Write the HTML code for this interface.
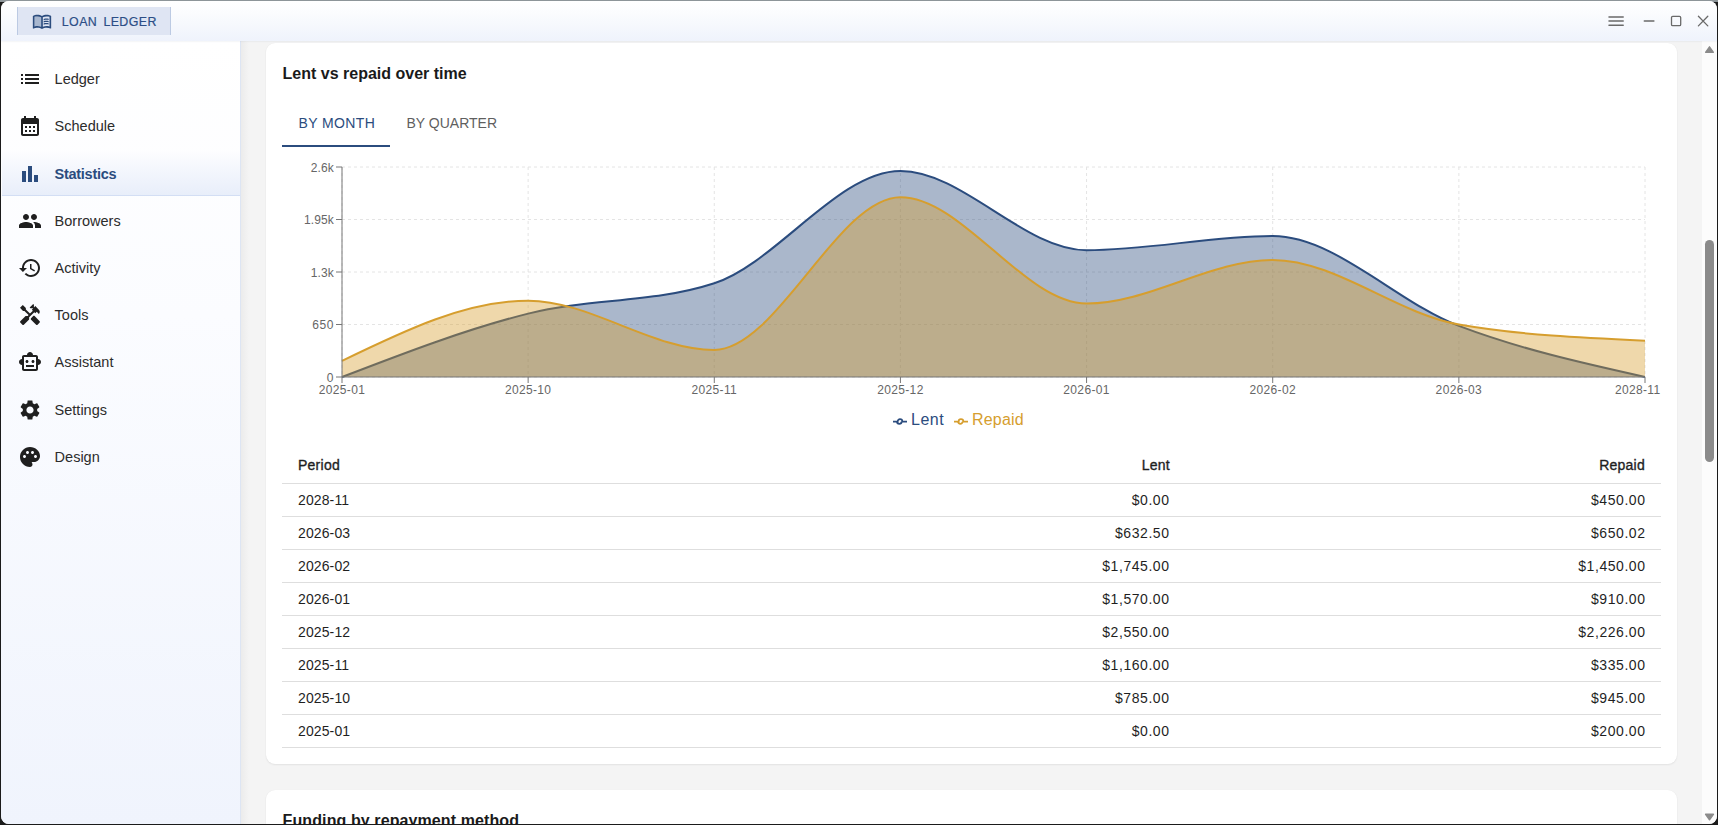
<!DOCTYPE html>
<html><head><meta charset="utf-8"><title>Loan Ledger</title>
<style>
*{box-sizing:border-box;margin:0;padding:0}
html,body{width:1718px;height:825px;overflow:hidden;background:#1b1b1b;font-family:"Liberation Sans",sans-serif}
#edge-top{position:absolute;left:0;top:0;width:1718px;height:2px;background:#8d9599}
#win{position:absolute;left:1px;top:1px;width:1716px;height:822.5px;border-radius:8px;overflow:hidden;background:#f4f4f4}
#win>*{position:absolute}
#tbar{left:0;top:0;width:1716px;height:39.5px;background:linear-gradient(#ffffff 0%,#fbfcfe 30%,#eff3fc 100%);box-shadow:0 0 2px rgba(60,70,100,.14);z-index:5}
#chip{position:absolute;left:16px;top:6px;width:154px;height:28px;background:#dfe5f3;border-left:1px solid #bccae3;border-right:1px solid #bccae3}
#chip svg{position:absolute;left:14.2px;top:3.75px;width:20px;height:20px;fill:#2b4c7e}
#chip span{position:absolute;left:43.8px;top:7.5px;font-size:12.4px;line-height:14px;letter-spacing:0.4px;word-spacing:2.4px;color:#2c4e86;white-space:nowrap;-webkit-text-stroke:.2px #2c4e86}
#side{left:0;top:39.5px;width:240px;height:783px;border-right:1px solid #dde5f3;background:linear-gradient(#ffffff 0%,#fbfcff 35%,#f0f4fd 100%);}
#sideshadow{left:240px;top:39.5px;width:8px;height:783px;background:linear-gradient(90deg,rgba(0,0,0,.035),rgba(0,0,0,0))}
.nav{position:absolute;left:1px;width:238px;height:47px;color:#2c2c2c;font-size:14.5px}
.nav .ni{position:absolute;left:15.6px;top:11px;width:24px;height:24px;fill:#1f1f1f}
.nav span{position:absolute;left:52.6px;top:14.5px;line-height:18px;white-space:nowrap}
.nav.sel{color:#2b4c7e;font-weight:bold;letter-spacing:-.28px}
#selbg{position:absolute;left:1px;top:110.7px;width:238px;height:44.5px;background:linear-gradient(#fdfdff 0%,#e8eefa 100%);border-bottom:1px solid #d3def4}
.nav.sel .ni{fill:#2b4c7e}
.card{background:#fff;border-radius:9px;box-shadow:0 1px 2px rgba(0,0,0,.07),0 0 1px rgba(0,0,0,.06)}
#card1{left:265px;top:42px;width:1411px;height:721px}
#card2{left:265px;top:789px;width:1411px;height:100px}
.h{position:absolute;left:16.6px;top:21px;font-size:16px;font-weight:bold;line-height:20px;color:#1a1a1a;white-space:nowrap;letter-spacing:0}
.tab{position:absolute;top:114px;font-size:14px;line-height:18px;white-space:nowrap}
#tabline{position:absolute;left:282px;top:145px;width:108px;height:2px;background:#2b4c7e}
#abs{left:-1px;top:-1px;width:1718px;height:825px;pointer-events:none}
#abs>*{position:absolute}
.grid{stroke:#e4e4e4;stroke-width:1;stroke-dasharray:3 3;fill:none}
.axis{stroke:#777;stroke-width:1;fill:none}
.tick{font-size:12px;fill:#666;font-family:"Liberation Sans",sans-serif;letter-spacing:.35px}
.ty{letter-spacing:.15px}
.th{top:456px;font-size:14px;line-height:18px;color:#1f1f1f;-webkit-text-stroke:.35px #1f1f1f;letter-spacing:.25px}
.tr{left:282px;width:1379px;height:33px;border-bottom:1px solid #dedede;font-size:14px;line-height:18px;color:#1f1f1f}
.tr span{position:absolute;top:7px;white-space:nowrap;letter-spacing:.55px}
.c1{left:16px;letter-spacing:.12px !important} .c2{right:491.5px} .c3{right:15.5px}
#hline{left:282px;top:483px;width:1379px;height:1px;background:#dedede}
.lg{top:410px;font-size:16px;line-height:20px;white-space:nowrap}
#sb{left:1701px;top:39.5px;width:15px;height:783px;background:#fcfcfc}
#thumb{position:absolute;left:3px;top:199.5px;width:9px;height:222px;border-radius:5px;background:#8b8b8b}
</style></head><body>
<div id="edge-top"></div>
<div id="win">
<div id="side">
<div id="selbg"></div>
<div class="nav" style="top:15.0px"><svg class="ni" viewBox="0 0 24 24"><path d="M3 13h2v-2H3v2zm0 4h2v-2H3v2zm0-8h2V7H3v2zm4 4h14v-2H7v2zm0 4h14v-2H7v2zM7 7v2h14V7H7z"/></svg><span>Ledger</span></div>
<div class="nav" style="top:62.0px"><svg class="ni" viewBox="0 0 24 24"><path d="M19 4h-1V2h-2v2H8V2H6v2H5c-1.11 0-1.99.9-1.99 2L3 20c0 1.1.89 2 2 2h14c1.1 0 2-.9 2-2V6c0-1.1-.9-2-2-2zm0 16H5V10h14v10zM9 14H7v-2h2v2zm4 0h-2v-2h2v2zm4 0h-2v-2h2v2zm-8 4H7v-2h2v2zm4 0h-2v-2h2v2zm4 0h-2v-2h2v2z"/></svg><span>Schedule</span></div>
<div class="nav sel" style="top:110.0px"><svg class="ni" viewBox="0 0 24 24"><path d="M4 9h4v11H4zm12 4h4v7h-4zm-6-9h4v16h-4z"/></svg><span>Statistics</span></div>
<div class="nav" style="top:157.0px"><svg class="ni" viewBox="0 0 24 24"><path d="M16 11c1.66 0 2.99-1.34 2.99-3S17.66 5 16 5c-1.66 0-3 1.34-3 3s1.34 3 3 3zm-8 0c1.66 0 2.99-1.34 2.99-3S9.66 5 8 5C6.34 5 5 6.34 5 8s1.34 3 3 3zm0 2c-2.33 0-7 1.17-7 3.5V19h14v-2.500c0-2.330-4.670-3.500-7-3.500zm8 0c-.29 0-.62.02-.97.05 1.160.84 1.970 1.970 1.970 3.450V19h6v-2.500c0-2.330-4.670-3.500-7-3.500z"/></svg><span>Borrowers</span></div>
<div class="nav" style="top:204.0px"><svg class="ni" viewBox="0 0 24 24"><path d="M13 3c-4.970 0-9 4.030-9 9H1l3.890 3.890.07.14L9 12H6c0-3.870 3.130-7 7-7s7 3.130 7 7-3.130 7-7 7c-1.930 0-3.680-.79-4.940-2.060l-1.420 1.420C8.270 19.990 10.510 21 13 21c4.970 0 9-4.030 9-9s-4.030-9-9-9zm-1 5v5l4.280 2.540.72-1.210-3.500-2.080V8H12z"/></svg><span>Activity</span></div>
<div class="nav" style="top:251.0px"><svg class="ni" viewBox="0 0 24 24"><path d="m21.670 18.170-5.300-5.300h-.99l-2.540 2.540v.99l5.300 5.300c.39.39 1.020.39 1.410 0l2.120-2.120c.39-.38.39-1.020 0-1.410z"/><path d="m17.340 10.190 1.410-1.410 2.120 2.120c1.170-1.170 1.170-3.070 0-4.240l-3.540-3.540-1.410 1.410V1.710l-.7-.71-3.540 3.540.71.71h2.830l-1.410 1.410 1.060 1.060-2.890 2.890-4.130-4.130V5.060L4.830 2.040 2 4.870 5.030 7.900h1.410l4.130 4.130-.85.85H7.600l-5.300 5.300c-.39.39-.39 1.020 0 1.410l2.120 2.120c.39.39 1.020.39 1.410 0l5.300-5.300v-2.120l5.150-5.150 1.060 1.050z"/></svg><span>Tools</span></div>
<div class="nav" style="top:298.0px"><svg class="ni" viewBox="0 0 24 24"><path d="M20 9V7c0-1.100-.9-2-2-2h-3c0-1.660-1.340-3-3-3S9 3.340 9 5H6c-1.100 0-2 .9-2 2v2c-1.660 0-3 1.340-3 3s1.340 3 3 3v4c0 1.100.9 2 2 2h12c1.100 0 2-.9 2-2v-4c1.660 0 3-1.340 3-3s-1.340-3-3-3zm-2 10H6V7h12v12zm-9-6c-.83 0-1.500-.67-1.500-1.500S8.170 10 9 10s1.500.67 1.500 1.500S9.830 13 9 13zm7.500-1.500c0 .83-.67 1.500-1.500 1.500s-1.500-.67-1.500-1.500.67-1.500 1.500-1.500 1.500.67 1.500 1.500zM8 15h8v2H8v-2z"/></svg><span>Assistant</span></div>
<div class="nav" style="top:346.0px"><svg class="ni" viewBox="0 0 24 24"><path d="M19.140 12.940c.04-.3.06-.61.06-.94 0-.32-.02-.64-.07-.94l2.030-1.580c.18-.14.23-.41.12-.61l-1.920-3.320c-.12-.22-.37-.29-.59-.22l-2.390.96c-.5-.38-1.030-.7-1.620-.94l-.36-2.540c-.04-.24-.24-.41-.48-.41h-3.840c-.24 0-.43.17-.47.41l-.36 2.540c-.59.24-1.130.57-1.620.94l-2.390-.96c-.22-.08-.47 0-.59.22L2.740 8.870c-.12.21-.08.47.12.61l2.030 1.580c-.05.3-.09.63-.09.94s.02.64.07.94l-2.030 1.580c-.18.14-.23.41-.12.61l1.920 3.320c.12.22.37.29.59.22l2.390-.96c.5.38 1.030.7 1.620.94l.36 2.540c.05.24.24.41.48.41h3.840c.24 0 .44-.17.47-.41l.36-2.540c.59-.24 1.130-.56 1.620-.94l2.390.96c.22.08.47 0 .59-.22l1.920-3.320c.12-.22.07-.47-.12-.61l-2.010-1.580zM12 15.600c-1.980 0-3.600-1.620-3.600-3.600s1.620-3.600 3.600-3.600 3.600 1.620 3.600 3.600-1.620 3.600-3.600 3.600z"/></svg><span>Settings</span></div>
<div class="nav" style="top:393.0px"><svg class="ni" viewBox="0 0 24 24"><path d="M12 2C6.490 2 2 6.490 2 12s4.490 10 10 10c1.380 0 2.500-1.120 2.500-2.500 0-.61-.23-1.200-.64-1.670-.08-.1-.13-.21-.13-.33 0-.28.22-.5.5-.5H16c3.310 0 6-2.690 6-6 0-4.960-4.490-9-10-9zm5.500 11c-.83 0-1.500-.67-1.500-1.500s.67-1.500 1.500-1.500 1.500.67 1.500 1.500-.67 1.500-1.500 1.500zm-3-4c-.83 0-1.500-.67-1.500-1.500S13.670 6 14.500 6s1.500.67 1.500 1.500S15.330 9 14.500 9zM5 11.500c0-.83.67-1.500 1.500-1.500s1.500.67 1.500 1.500S7.330 13 6.500 13 5 12.330 5 11.500zm6-4c0 .83-.67 1.500-1.500 1.500S8 8.330 8 7.500 8.670 6 9.500 6s1.500.67 1.500 1.500z"/></svg><span>Design</span></div>

</div>
<div id="sideshadow"></div>
<div id="card1" class="card"><div class="h">Lent vs repaid over time</div></div>
<div id="card2" class="card"><div class="h" style="letter-spacing:.1px">Funding by repayment method</div></div>
<div id="abs">
<span class="tab" style="left:298.5px;color:#2b4c7e;letter-spacing:.4px">BY MONTH</span>
<span class="tab" style="left:406.5px;color:#5f5f5f">BY QUARTER</span>
<div id="tabline"></div>
<svg style="left:0;top:0" width="1718" height="825" viewBox="0 0 1718 825">
<line x1="342.0" x2="1645.0" y1="377.00" y2="377.00" class="grid"/><line x1="342.0" x2="1645.0" y1="324.50" y2="324.50" class="grid"/><line x1="342.0" x2="1645.0" y1="272.00" y2="272.00" class="grid"/><line x1="342.0" x2="1645.0" y1="219.50" y2="219.50" class="grid"/><line x1="342.0" x2="1645.0" y1="167.00" y2="167.00" class="grid"/><line x1="342.00" x2="342.00" y1="167.0" y2="377.0" class="grid"/><line x1="528.14" x2="528.14" y1="167.0" y2="377.0" class="grid"/><line x1="714.29" x2="714.29" y1="167.0" y2="377.0" class="grid"/><line x1="900.43" x2="900.43" y1="167.0" y2="377.0" class="grid"/><line x1="1086.57" x2="1086.57" y1="167.0" y2="377.0" class="grid"/><line x1="1272.71" x2="1272.71" y1="167.0" y2="377.0" class="grid"/><line x1="1458.86" x2="1458.86" y1="167.0" y2="377.0" class="grid"/><line x1="1645.00" x2="1645.00" y1="167.0" y2="377.0" class="grid"/>
<path d="M342.000,377.000C404.048,353.106,466.095,329.212,528.143,313.596C590.190,297.981,652.238,303.500,714.286,283.308C776.333,263.115,838.381,171.038,900.429,171.038C962.476,171.038,1024.524,250.192,1086.571,250.192C1148.619,250.192,1210.667,236.058,1272.714,236.058C1334.762,236.058,1396.810,302.423,1458.857,325.913C1520.905,349.404,1582.952,363.202,1645.000,377.000L1645.000,377.000 L342.000,377.000 Z" fill="#2b4c7e" fill-opacity=".4"/>
<path d="M342.000,377.000C404.048,353.106,466.095,329.212,528.143,313.596C590.190,297.981,652.238,303.500,714.286,283.308C776.333,263.115,838.381,171.038,900.429,171.038C962.476,171.038,1024.524,250.192,1086.571,250.192C1148.619,250.192,1210.667,236.058,1272.714,236.058C1334.762,236.058,1396.810,302.423,1458.857,325.913C1520.905,349.404,1582.952,363.202,1645.000,377.000" fill="none" stroke="#2b4c7e" stroke-width="2"/>
<path d="M342.000,360.846C404.048,330.760,466.095,300.673,528.143,300.673C590.190,300.673,652.238,349.942,714.286,349.942C776.333,349.942,838.381,197.208,900.429,197.208C962.476,197.208,1024.524,303.500,1086.571,303.500C1148.619,303.500,1210.667,259.885,1272.714,259.885C1334.762,259.885,1396.810,313.728,1458.857,324.498C1520.905,335.269,1582.952,337.961,1645.000,340.654L1645.000,377.000 L342.000,377.000 Z" fill="#d69e2e" fill-opacity=".4"/>
<path d="M342.000,360.846C404.048,330.760,466.095,300.673,528.143,300.673C590.190,300.673,652.238,349.942,714.286,349.942C776.333,349.942,838.381,197.208,900.429,197.208C962.476,197.208,1024.524,303.500,1086.571,303.500C1148.619,303.500,1210.667,259.885,1272.714,259.885C1334.762,259.885,1396.810,313.728,1458.857,324.498C1520.905,335.269,1582.952,337.961,1645.000,340.654" fill="none" stroke="#d69e2e" stroke-width="2"/>
<line x1="342.0" x2="1645.0" y1="377.0" y2="377.0" class="axis"/><line x1="342.0" x2="342.0" y1="167.0" y2="377.0" class="axis"/><line x1="342.00" x2="342.00" y1="377.0" y2="383.0" class="axis"/><text x="342.00" y="394" text-anchor="middle" class="tick">2025-01</text><line x1="528.14" x2="528.14" y1="377.0" y2="383.0" class="axis"/><text x="528.14" y="394" text-anchor="middle" class="tick">2025-10</text><line x1="714.29" x2="714.29" y1="377.0" y2="383.0" class="axis"/><text x="714.29" y="394" text-anchor="middle" class="tick">2025-11</text><line x1="900.43" x2="900.43" y1="377.0" y2="383.0" class="axis"/><text x="900.43" y="394" text-anchor="middle" class="tick">2025-12</text><line x1="1086.57" x2="1086.57" y1="377.0" y2="383.0" class="axis"/><text x="1086.57" y="394" text-anchor="middle" class="tick">2026-01</text><line x1="1272.71" x2="1272.71" y1="377.0" y2="383.0" class="axis"/><text x="1272.71" y="394" text-anchor="middle" class="tick">2026-02</text><line x1="1458.86" x2="1458.86" y1="377.0" y2="383.0" class="axis"/><text x="1458.86" y="394" text-anchor="middle" class="tick">2026-03</text><line x1="1645.00" x2="1645.00" y1="377.0" y2="383.0" class="axis"/><text x="1660.5" y="394" text-anchor="end" class="tick">2028-11</text><line x1="336.0" x2="342.0" y1="377.00" y2="377.00" class="axis"/><text x="334.0" y="381.70" text-anchor="end" class="tick ty" style="letter-spacing:.6px">0</text><line x1="336.0" x2="342.0" y1="324.50" y2="324.50" class="axis"/><text x="334.0" y="329.20" text-anchor="end" class="tick ty" style="letter-spacing:.6px">650</text><line x1="336.0" x2="342.0" y1="272.00" y2="272.00" class="axis"/><text x="334.0" y="276.70" text-anchor="end" class="tick ty">1.3k</text><line x1="336.0" x2="342.0" y1="219.50" y2="219.50" class="axis"/><text x="334.0" y="224.20" text-anchor="end" class="tick ty">1.95k</text><line x1="336.0" x2="342.0" y1="167.00" y2="167.00" class="axis"/><text x="334.0" y="171.70" text-anchor="end" class="tick ty">2.6k</text>
<g fill="none" stroke-width="1.75">
<path stroke="#2b4c7e" d="M893,421.5h4.67a2.33,2.33 0 1,1 4.66,0h4.67M901.66,421.5a2.33,2.33 0 1,1 -4.66,0"/>
<path stroke="#d69e2e" d="M954,421.5h4.67a2.33,2.33 0 1,1 4.66,0h4.67M962.66,421.5a2.33,2.33 0 1,1 -4.66,0"/>
</g>
</svg>
<span class="lg" style="left:911px;color:#2b4c7e;letter-spacing:.5px">Lent</span>
<span class="lg" style="left:972px;color:#d69e2e;letter-spacing:.2px">Repaid</span>
<span class="th" style="left:298px">Period</span>
<span class="th" style="right:548px">Lent</span>
<span class="th" style="right:73px">Repaid</span>
<div id="hline"></div>
<div class="tr" style="top:484px"><span class="c1">2028-11</span><span class="c2">$0.00</span><span class="c3">$450.00</span></div>
<div class="tr" style="top:517px"><span class="c1">2026-03</span><span class="c2">$632.50</span><span class="c3">$650.02</span></div>
<div class="tr" style="top:550px"><span class="c1">2026-02</span><span class="c2">$1,745.00</span><span class="c3">$1,450.00</span></div>
<div class="tr" style="top:583px"><span class="c1">2026-01</span><span class="c2">$1,570.00</span><span class="c3">$910.00</span></div>
<div class="tr" style="top:616px"><span class="c1">2025-12</span><span class="c2">$2,550.00</span><span class="c3">$2,226.00</span></div>
<div class="tr" style="top:649px"><span class="c1">2025-11</span><span class="c2">$1,160.00</span><span class="c3">$335.00</span></div>
<div class="tr" style="top:682px"><span class="c1">2025-10</span><span class="c2">$785.00</span><span class="c3">$945.00</span></div>
<div class="tr" style="top:715px"><span class="c1">2025-01</span><span class="c2">$0.00</span><span class="c3">$200.00</span></div>

</div>
<div id="sb"><div id="thumb"></div>
<svg style="position:absolute;left:0;top:0" width="15" height="783" viewBox="0 0 15 783"><path d="M7.5 5.8 L11.4 11.3 H3.6Z M7.500 778.800 L11.400 773.300 H3.600Z" fill="#8b8b8b" stroke="#8b8b8b" stroke-width="1.4" stroke-linejoin="round"/></svg>
</div>
<div id="tbar">
<div id="chip"><svg viewBox="0 0 24 24"><path d="M21 5c-1.110-.35-2.330-.5-3.500-.5-1.950 0-4.050.4-5.500 1.500-1.450-1.100-3.550-1.500-5.500-1.500S2.450 4.900 1 6v14.650c0 .25.25.5.5.5.1 0 .15-.05.25-.05C3.100 20.450 5.050 20 6.500 20c1.950 0 4.050.4 5.500 1.500 1.350-.85 3.800-1.500 5.500-1.500 1.650 0 3.350.3 4.750 1.050.1.050.15.050.25.050.25 0 .5-.25.5-.5V6c-.6-.45-1.250-.75-2-1zM3 18.500V7c1.100-.35 2.300-.5 3.500-.5 1.340 0 3.130.41 4.500.99v11.500C9.630 18.410 7.840 18 6.500 18c-1.200 0-2.400.15-3.500.5zm18 0c-1.100-.35-2.300-.5-3.500-.5-1.340 0-3.130.41-4.500.99V7.490c1.370-.59 3.160-.99 4.500-.99 1.200 0 2.400.15 3.500.5v11.500z"/><path d="M11 7.490C9.630 6.910 7.840 6.500 6.500 6.500c-1.200 0-2.400.15-3.500.5v11.500c1.100-.35 2.300-.5 3.500-.5 1.340 0 3.130.41 4.500.99V7.490z" opacity=".3"/><path d="M17.500 10.500c.88 0 1.730.09 2.500.26V9.240c-.79-.15-1.640-.24-2.500-.24-1.280 0-2.460.16-3.500.47v1.570c.99-.35 2.180-.54 3.500-.54zm0 2.660c.88 0 1.730.09 2.500.26V11.900c-.79-.15-1.640-.24-2.500-.24-1.280 0-2.460.16-3.500.47v1.570c.99-.34 2.180-.54 3.500-.54zm0 2.670c.88 0 1.730.09 2.500.26v-1.520c-.79-.15-1.640-.24-2.500-.24-1.280 0-2.460.16-3.500.47v1.570c.99-.35 2.180-.54 3.500-.54z"/></svg><span>LOAN LEDGER</span></div>
<svg style="position:absolute;left:1595px;top:0" width="121" height="40" viewBox="1596 1 121 40" fill="none" stroke="#6a6a6a" stroke-width="1.5" stroke-linecap="round">
<path d="M1609 17h14.200M1609 21.100h14.200M1609 25.200h14.200"/>
<path d="M1644.300 21.100h9.600"/>
<rect x="1671.500" y="16.300" width="9.200" height="9.400" rx="1.200" stroke-width="1.300"/>
<path d="M1698.400 16.300l9.400 9.600M1707.800 16.300l-9.400 9.600" stroke-width="1.300"/>
</svg>
</div>
</div>
</body></html>
